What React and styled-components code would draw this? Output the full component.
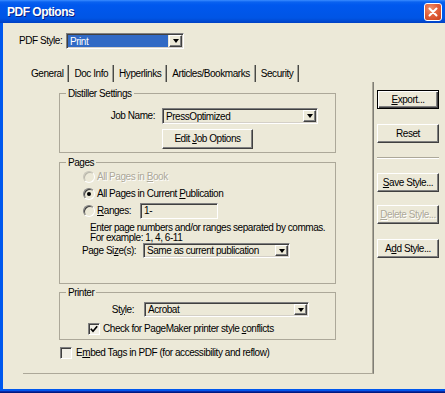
import React from 'react';
import styled, { createGlobalStyle } from 'styled-components';

const Global = createGlobalStyle`
  html, body { margin: 0; padding: 0; background: #ECE9D8; }
  body {
    font-family: "Liberation Sans", Arial, sans-serif;
    font-size: 10px;
    letter-spacing: -0.45px;
    color: #000;
  }
  * { box-sizing: border-box; }
`;

const Frame = styled.div`
  width: 445px;
  height: 393px;
  display: flex;
  flex-direction: column;
  overflow: hidden;
  background: #ECE9D8;
`;

const TitleBar = styled.div`
  flex: none;
  height: 23px;
  display: flex;
  align-items: center;
  justify-content: space-between;
  padding: 0 3px 0 7px;
  background: linear-gradient(to bottom, #3A8CFF 0px, #0A62F0 2px, #0058EE 5px, #0055E5 18px, #004AD3 21px, #0040C2 23px);
`;

const Title = styled.span`
  color: #fff;
  font-weight: bold;
  font-size: 12px;
  letter-spacing: -0.5px;
  text-shadow: 1px 1px 0 #0A1E80;
`;

const CloseBox = styled.div`
  width: 18px;
  height: 18px;
  border: 1px solid #fff;
  border-radius: 3px;
  background: radial-gradient(circle at 35% 30%, #F0926E 0%, #E2603B 45%, #C8401C 100%);
  display: flex;
  align-items: center;
  justify-content: center;
`;

const Client = styled.div`
  flex: 1;
  min-height: 0;
  display: flex;
  border-left: 3px solid #0058EE;
`;

const BottomEdge = styled.div`
  flex: none;
  height: 4px;
  background: linear-gradient(to bottom, #0058EE 0 2px, #0A2AA8 2px 3px, #001A80 3px);
`;

const LeftCol = styled.div`
  width: 371px;
  flex: none;
  display: flex;
  flex-direction: column;
`;

const RightCol = styled.div`
  flex: 1;
  display: flex;
  flex-direction: column;
  padding: 67px 0 0 3px;
`;

const Row = styled.div`
  display: flex;
  align-items: center;
  height: ${p => p.$h || 16}px;
  margin: ${p => p.$m || '0'};
`;

const Label = styled.span`
  flex: none;
  width: ${p => (p.$w ? `${p.$w}px` : 'auto')};
  text-align: ${p => p.$right ? 'right' : 'left'};
  margin-right: ${p => p.$mr || 0}px;
  line-height: 12px;
  white-space: nowrap;
  color: ${p => p.$disabled ? '#ACA899' : '#000'};
  text-shadow: ${p => p.$disabled ? '1px 1px 0 #fff' : 'none'};
`;

const U = styled.span`
  text-decoration: underline;
`;

const ComboBox = styled.div`
  flex: none;
  width: ${p => p.$w}px;
  height: ${p => p.$h || 16}px;
  display: flex;
  align-items: stretch;
  border: 1px solid;
  border-color: #808080 #fff #fff #808080;
  box-shadow: inset 1px 1px 0 #404040, inset -1px -1px 0 #D4D0C8;
  padding: 1px;
  background: #ECE9D8;
`;

const ComboValue = styled.div`
  flex: 1;
  display: flex;
  align-items: center;
  padding-left: 2px;
  margin-right: 1px;
  white-space: nowrap;
  overflow: hidden;
  background: ${p => p.$selected ? '#316AC5' : 'transparent'};
  color: ${p => p.$selected ? '#fff' : '#000'};
`;

const DropButton = styled.div`
  flex: none;
  width: 13px;
  display: flex;
  align-items: center;
  justify-content: center;
  border: 1px solid;
  border-color: #fff #404040 #404040 #fff;
  box-shadow: inset -1px -1px 0 #808080;
  background: #ECE9D8;
`;

const Arrow = styled.span`
  width: 0;
  height: 0;
  border-left: 3.5px solid transparent;
  border-right: 3.5px solid transparent;
  border-top: 4px solid #000;
`;

const TabStrip = styled.div`
  display: flex;
  height: 17px;
  margin: 16px 0 0 20px;
`;

const Tab = styled.div`
  display: flex;
  align-items: center;
  padding: 0 5px 0 ${p => p.$first ? 8 : 5}px;
  border-right: 1px solid #4A4A45;
  box-shadow: inset -1px 0 0 #A0A098;
  white-space: nowrap;
`;

const Panel = styled.div`
  margin-left: 20px;
  width: 351px;
  height: 292px;
  border-right: 1px solid #7F7E76;
  border-bottom: 1px solid #ACA899;
  box-shadow: inset -1px 0 0 #ACA899;
  padding: 11px 0 0 36px;
  display: flex;
  flex-direction: column;
  align-items: flex-start;
`;

const Group = styled.div`
  position: relative;
  flex: none;
  width: 277px;
  height: ${p => p.$h}px;
  margin-bottom: ${p => p.$mb || 0}px;
  border: 1px solid #ACA899;
  padding: ${p => p.$pad};
  display: flex;
  flex-direction: column;
  align-items: flex-start;
`;

const Legend = styled.span`
  position: absolute;
  top: -6px;
  left: 6px;
  padding: 0 2px;
  line-height: 12px;
  background: #ECE9D8;
`;

const PushButton = styled.div`
  flex: none;
  width: ${p => p.$w || 62}px;
  height: ${p => p.$h || 19}px;
  margin: ${p => p.$m || '0'};
  display: flex;
  align-items: center;
  justify-content: center;
  white-space: nowrap;
  background: #ECE9D8;
  border: 1px solid;
  border-color: ${p => p.$default ? '#000' : '#fff #404040 #404040 #fff'};
  box-shadow: ${p => p.$default
    ? 'inset 1px 1px 0 #fff, inset -1px -1px 0 #404040, inset -2px -2px 0 #808080'
    : 'inset -1px -1px 0 #808080'};
  color: ${p => p.$disabled ? '#ACA899' : '#000'};
  text-shadow: ${p => p.$disabled ? '1px 1px 0 #fff' : 'none'};
`;

const ButtonText = styled.span`
  white-space: pre;
  line-height: 12px;
`;

const Separator = styled.div`
  width: 62px;
  height: 2px;
  margin-top: 14px;
  border-top: 1px solid #ACA899;
  border-bottom: 1px solid #fff;
`;

const Radio = styled.span`
  position: relative;
  flex: none;
  width: 12px;
  height: 12px;
  margin-right: 2px;
  border-radius: 50%;
  border: 1px solid;
  border-color: ${p => p.$disabled ? '#C8C6BA #fff #fff #C8C6BA' : '#808080 #fff #fff #808080'};
  box-shadow: inset 1px 1px 0 ${p => p.$disabled ? '#B8B6AA' : '#404040'};
  background: #ECE9D8;
  &::after {
    content: '';
    display: ${p => p.$checked ? 'block' : 'none'};
    position: absolute;
    left: 3px;
    top: 3px;
    width: 4px;
    height: 4px;
    border-radius: 50%;
    background: #000;
  }
`;

const CheckBox = styled.span`
  flex: none;
  width: 12px;
  height: 12px;
  margin-right: ${p => p.$mr || 3}px;
  display: flex;
  align-items: center;
  justify-content: center;
  border: 1px solid;
  border-color: #808080 #fff #fff #808080;
  box-shadow: inset 1px 1px 0 #404040;
  background: #F1EFE6;
`;

const TextInput = styled.div`
  flex: none;
  width: ${p => p.$w}px;
  height: 16px;
  margin-left: ${p => p.$ml || 0}px;
  display: flex;
  align-items: center;
  padding-left: 3px;
  border: 1px solid;
  border-color: #808080 #fff #fff #808080;
  box-shadow: inset 1px 1px 0 #404040;
  background: #ECE9D8;
`;

const Help = styled.div`
  margin: 4px 0 0 7px;
  line-height: 10px;
  white-space: nowrap;
`;

const Combo = ({ w, h, value, selected }) => (
  <ComboBox $w={w} $h={h}>
    <ComboValue $selected={selected}>{value}</ComboValue>
    <DropButton><Arrow /></DropButton>
  </ComboBox>
);

const Button = ({ children, ...rest }) => (
  <PushButton {...rest}><ButtonText>{children}</ButtonText></PushButton>
);

const Check = () => (
  <svg width="8" height="8" viewBox="0 0 8 8">
    <polyline points="0.8,3.8 3,6.2 7.2,1.2" fill="none" stroke="#000" strokeWidth="1.7" />
  </svg>
);

export default function App() {
  return (
    <>
      <Global />
      <Frame>
        <TitleBar>
          <Title>PDF Options</Title>
          <CloseBox>
            <svg width="10" height="10" viewBox="0 0 10 10">
              <path d="M1.5 1.5 L8.5 8.5 M8.5 1.5 L1.5 8.5" stroke="#fff" strokeWidth="2" strokeLinecap="round" />
            </svg>
          </CloseBox>
        </TitleBar>
        <Client>
          <LeftCol>
            <Row $m="10px 0 0 16px">
              <Label $w={47}>PDF Style:</Label>
              <Combo w={118} value="Print" selected />
            </Row>
            <TabStrip>
              <Tab $first>General</Tab>
              <Tab>Doc Info</Tab>
              <Tab>Hyperlinks</Tab>
              <Tab>Articles/Bookmarks</Tab>
              <Tab>Security</Tab>
            </TabStrip>
            <Panel>
              <Group $h={60} $mb={9} $pad="14px 0 0 0">
                <Legend>Distiller Settings</Legend>
                <Row>
                  <Label $w={95} $right $mr={7}>Job Name:</Label>
                  <Combo w={156} value="PressOptimized" />
                </Row>
                <Button $w={91} $h={20} $m="5px 0 0 102px">Edit <U>J</U>ob Options</Button>
              </Group>
              <Group $h={122} $mb={8} $pad="5px 0 0 23px">
                <Legend>Pages</Legend>
                <Row $h={17}>
                  <Radio $disabled />
                  <Label $disabled>All Pages in <U>B</U>ook</Label>
                </Row>
                <Row $h={17}>
                  <Radio $checked />
                  <Label>All Pages in Current <U>P</U>ublication</Label>
                </Row>
                <Row $h={17}>
                  <Radio />
                  <Label><U>R</U>anges:</Label>
                  <TextInput $w={78} $ml={9}>1-</TextInput>
                </Row>
                <Help>
                  Enter page numbers and/or ranges separated by commas.<br />
                  For example: 1, 4, 6-11
                </Help>
                <Row $h={15} $m="0 0 0 -1px">
                  <Label $w={61}>Page Si<U>z</U>e(s):</Label>
                  <Combo w={147} h={15} value="Same as current publication" />
                </Row>
              </Group>
              <Group $h={48} $pad="9px 0 0 0">
                <Legend>Printer</Legend>
                <Row $h={15}>
                  <Label $w={74} $right $mr={10}>St<U>y</U>le:</Label>
                  <Combo w={165} h={15} value="Acrobat" />
                </Row>
                <Row $h={12} $m="6px 0 0 28px">
                  <CheckBox><Check /></CheckBox>
                  <Label>Check for PageMaker printer style <U>c</U>onflicts</Label>
                </Row>
              </Group>
              <Row $h={12} $m="7px 0 0 1px">
                <CheckBox $mr={4} />
                <Label>E<U>m</U>bed Tags in PDF (for accessibility and reflow)</Label>
              </Row>
            </Panel>
          </LeftCol>
          <RightCol>
            <Button $default><U>E</U>xport...</Button>
            <Button $m="15px 0 0 0">Reset</Button>
            <Separator />
            <Button $m="14px 0 0 0"><U>S</U>ave Style...</Button>
            <Button $m="13px 0 0 0" $disabled><U>D</U>elete Style...</Button>
            <Button $m="15px 0 0 0">A<U>d</U>d Style...</Button>
          </RightCol>
        </Client>
        <BottomEdge />
      </Frame>
    </>
  );
}
